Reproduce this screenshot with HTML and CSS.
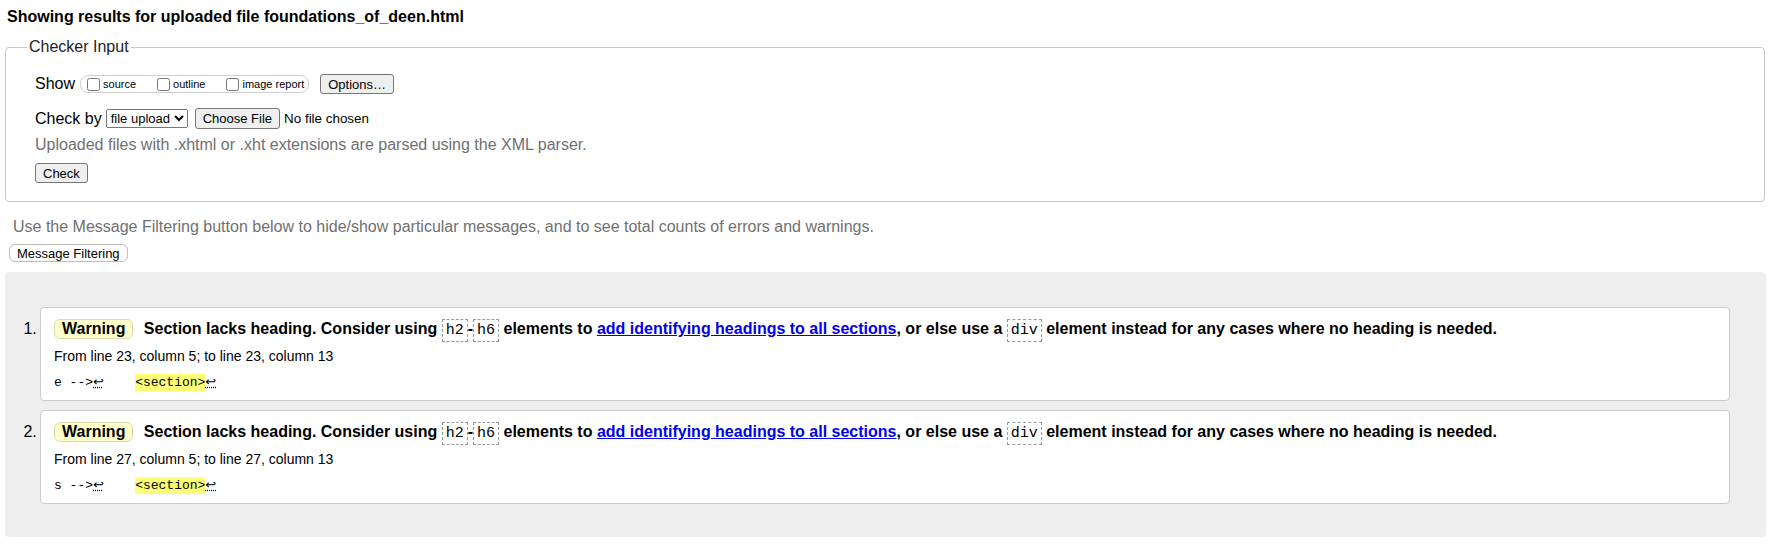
FILE: index.html
```html
<!DOCTYPE html>
<html lang="en">
<head>
<meta charset="utf-8">
<title>Nu Html Checker</title>
<link rel="stylesheet" href="styles.css">
</head>
<body>
<p class="title">Showing results for uploaded file foundations_of_deen.html</p>
<fieldset class="checker">
  <legend>Checker Input</legend>
  <div class="row row-show">
    <span class="lbl">Show</span>
    <span class="group">
      <label class="opt"><input type="checkbox">source</label>
      <label class="opt"><input type="checkbox">outline</label>
      <label class="opt"><input type="checkbox">image report</label>
    </span>
    <button class="btn btn-options">Options…</button>
  </div>
  <div class="row row-by">
    <span class="lbl">Check by</span>
    <select class="sel"><option>file upload</option></select>
    <button class="btn btn-file">Choose File</button>
    <span class="nofile">No file chosen</span>
  </div>
  <p class="hint">Uploaded files with .xhtml or .xht extensions are parsed using the XML parser.</p>
  <div class="row row-check">
    <button class="btn">Check</button>
  </div>
</fieldset>
<p class="filter-note">Use the Message Filtering button below to hide/show particular messages, and to see total counts of errors and warnings.</p>
<button class="filter-btn">Message Filtering</button>
<div class="results">
  <ol class="messages">
    <li class="msg">
      <p class="msg-line"><span class="badge">Warning</span> Section lacks heading. Consider using <code class="ref">h2</code>-<code class="ref">h6</code> elements to <a href="#" class="link">add identifying headings to all sections</a>, or else use a <code class="ref">div</code> element instead for any cases where no heading is needed.</p>
      <p class="loc">From line 23, column 5; to line 23, column 13</p>
      <p class="extract">e --&gt;<abbr class="lf" title="Line break">↩</abbr>    <mark class="hl">&lt;section&gt;</mark><abbr class="lf" title="Line break">↩</abbr></p>
    </li>
    <li class="msg">
      <p class="msg-line"><span class="badge">Warning</span> Section lacks heading. Consider using <code class="ref">h2</code>-<code class="ref">h6</code> elements to <a href="#" class="link">add identifying headings to all sections</a>, or else use a <code class="ref">div</code> element instead for any cases where no heading is needed.</p>
      <p class="loc">From line 27, column 5; to line 27, column 13</p>
      <p class="extract">s --&gt;<abbr class="lf" title="Line break">↩</abbr>    <mark class="hl">&lt;section&gt;</mark><abbr class="lf" title="Line break">↩</abbr></p>
    </li>
  </ol>
</div>
</body>
</html>
```

FILE: styles.css
```css
* { box-sizing: border-box; }

body {
  margin: 0;
  padding: 0 8px 0 5px;
  font-family: "Liberation Sans", Arial, sans-serif;
  font-size: 16px;
  color: #000;
  background: #fff;
}

.title {
  margin: 8px 0 0 2px;
  font-weight: bold;
  line-height: 18px;
}

.checker {
  margin: 12px 1px 0 0;
  padding: 18px 0 18px 29px;
  border: 1px solid #c8c8c8;
  border-radius: 4px;
  min-inline-size: 0;
}

.checker legend {
  margin-left: -8px;
  padding: 0 2px;
  line-height: 18px;
  color: #222;
}

.row {
  display: flex;
  align-items: center;
}

.row-show { height: 20px; }
.row-by { height: 21px; margin-top: 14px; }
.row-check { height: 20px; margin-top: 9px; }

.lbl { line-height: 18px; }

.group {
  display: inline-flex;
  align-items: center;
  height: 18px;
  margin-left: 5px;
  padding: 0 4px 0 6px;
  border: 1px solid #cfcfcf;
  border-radius: 8px;
}

.opt {
  display: inline-flex;
  align-items: center;
  font-size: 11px;
  margin-right: 21px;
}

.opt:last-child { margin-right: 0; }

.opt input {
  margin: 0 3px 0 0;
  width: 13px;
  height: 13px;
}

.btn {
  font-family: "Liberation Sans", Arial, sans-serif;
  font-size: 13px;
  height: 20px;
  padding: 0 7px;
  border: 1px solid #767676;
  border-radius: 3px;
  background: #efefef;
  color: #000;
  line-height: 1;
}

.btn-options { margin-left: 11px; }
.btn-file { margin-left: 7px; height: 21px; }

.sel {
  margin-left: 4px;
  height: 19px;
  font-family: "Liberation Sans", Arial, sans-serif;
  font-size: 13px;
}

.nofile {
  margin-left: 4px;
  font-size: 13.4px;
}

.hint {
  margin: 7px 0 0;
  line-height: 18px;
  color: #707070;
}

.filter-note {
  margin: 16px 0 0 8px;
  line-height: 18px;
  color: #707070;
}

.filter-btn {
  display: block;
  margin: 8px 0 0 4px;
  height: 18px;
  padding: 0 7px;
  font-family: "Liberation Sans", Arial, sans-serif;
  font-size: 13px;
  line-height: 1;
  color: #000;
  border: 1px solid #bcbcbc;
  border-radius: 6px;
  background: #fff;
}

.results {
  margin-top: 10px;
  padding: 35px 36px 33px 35px;
  background: #eee;
  border-radius: 4px;
}

.messages {
  margin: 0;
  padding: 0;
}

.msg {
  margin: 0;
  padding: 10px 13px 8px;
  background: #fff;
  border: 1px solid #ccc;
  border-radius: 4px;
}

.msg::marker {
  content: counter(list-item) ".\2009";
}

.msg + .msg { margin-top: 9px; }

.msg-line {
  margin: 0;
  height: 22px;
  font-weight: bold;
  line-height: 22px;
}

.badge {
  display: inline-block;
  height: 20px;
  line-height: 18px;
  padding: 0 7px;
  margin-right: 6px;
  background: #ffc;
  border: 1px solid #dcdcaa;
  border-radius: 6px;
}

.ref {
  font-family: "Liberation Mono", "DejaVu Sans Mono", monospace;
  font-size: 15px;
  line-height: 16px;
  font-weight: normal;
  padding: 2px 3px;
  border: 1px dashed #999;
}

.link { color: #00e; }

.loc {
  margin: 7px 0 0;
  font-size: 14px;
  line-height: 18px;
}

.extract {
  margin: 9px 0 0;
  height: 18px;
  line-height: 18px;
  font-family: "Liberation Mono", "DejaVu Sans Mono", monospace;
  font-size: 13px;
  white-space: pre;
}

.hl {
  background: #ff7;
  color: inherit;
  padding: 1px 0;
}

.lf {
  font-family: "DejaVu Sans", sans-serif;
  font-size: 13px;
  line-height: 1;
  text-decoration: underline dotted;
}
```
